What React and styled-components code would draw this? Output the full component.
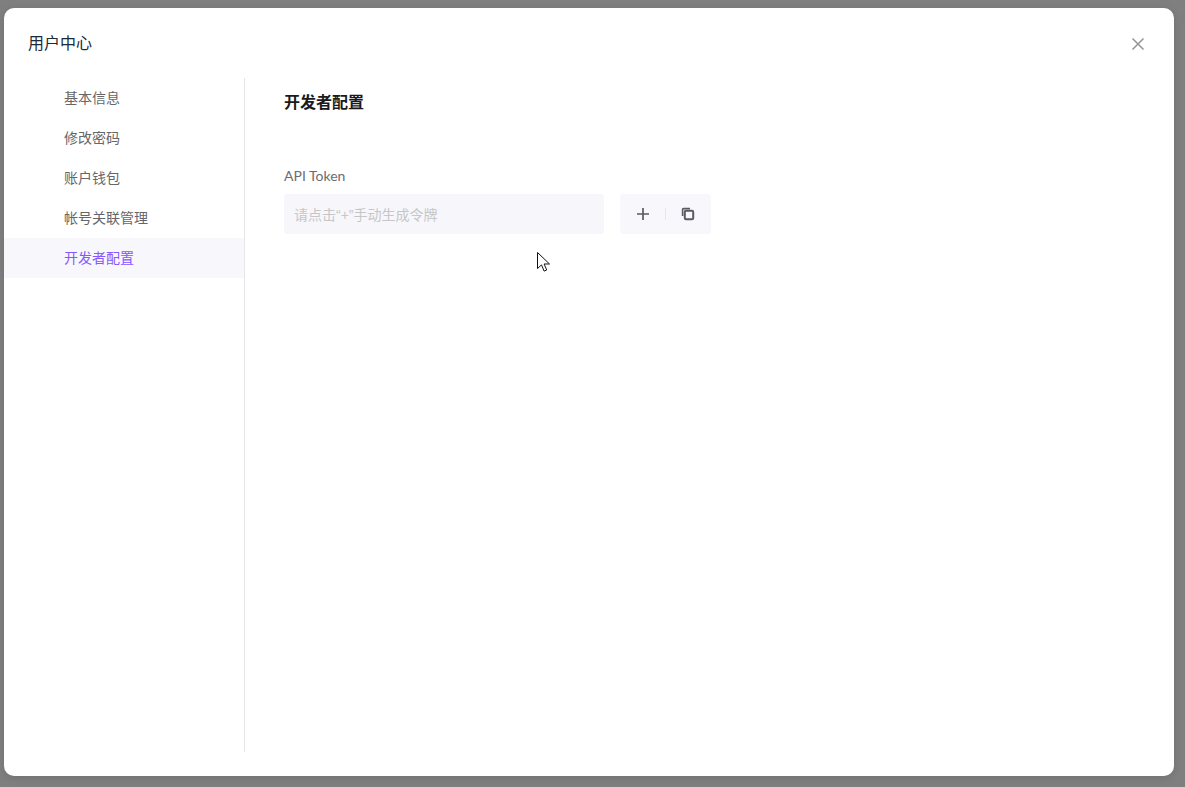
import React from 'react'
import styled, { createGlobalStyle } from 'styled-components'

const GlobalStyle = createGlobalStyle`
	html, body {
		margin: 0;
		padding: 0;
		height: 100%;
		background: #808080;
		font-family: 'Liberation Sans', 'Noto Sans CJK SC', sans-serif;
	}
`

const Backdrop = styled.div`
	position: relative;
	box-sizing: border-box;
	width: 1185px;
	height: 787px;
	overflow: hidden;
	padding: 8px 11px 11px 4px;
	background: #7f7f7f;
`

const Modal = styled.div`
	display: flex;
	flex-direction: column;
	height: 768px;
	background: #fff;
	border-radius: 10px;
	box-shadow: 0 2px 8px rgba(0, 0, 0, 0.12);
`

const ModalHeader = styled.header`
	display: flex;
	align-items: center;
	justify-content: space-between;
	box-sizing: border-box;
	height: 70px;
	padding: 0 29px 0 24px;
`

const ModalTitle = styled.h2`
	margin: 0 0 2px;
	font-size: 16px;
	font-weight: 400;
	color: #1c2a3a;
`

const CloseButton = styled.button`
	display: flex;
	margin-top: 2px;
	padding: 0;
	border: 0;
	background: none;
	color: #97979b;
`

const ModalBody = styled.div`
	display: flex;
	height: 674px;
`

const Sidebar = styled.nav`
	flex: none;
	box-sizing: content-box;
	width: 240px;
	border-right: 1px solid #e6e6e8;
`

const MenuItem = styled.div`
	height: 40px;
	padding-left: 60px;
	line-height: 40px;
	font-size: 14px;
	color: ${props => (props.$active ? '#8559ff' : '#66666a')};
	background: ${props => (props.$active ? '#f8f7fc' : 'transparent')};
`

const Content = styled.main`
	flex: 1;
	padding: 15px 39px 0;
`

const SectionTitle = styled.h3`
	margin: 0;
	height: 20px;
	line-height: 20px;
	font-size: 16px;
	font-weight: 700;
	color: #1a1a1c;
`

const FieldLabel = styled.label`
	display: block;
	margin-top: 53px;
	line-height: 20px;
	font-family: 'Lato', 'Noto Sans', sans-serif;
	font-size: 14px;
	color: #6c6c74;
`

const FieldRow = styled.div`
	display: flex;
	gap: 16px;
	margin-top: 8px;
`

const TokenInput = styled.div`
	box-sizing: border-box;
	width: 320px;
	height: 40px;
	padding-left: 10px;
	line-height: 42px;
	font-size: 14px;
	color: #c6c6c8;
	background: #f6f6fb;
	border-radius: 3px;
`

const ActionGroup = styled.div`
	display: flex;
	align-items: center;
	box-sizing: border-box;
	width: 91px;
	height: 40px;
	padding-left: 16px;
	background: #f8f7fc;
	border-radius: 3px;
`

const ActionButton = styled.button`
	display: flex;
	padding: 0;
	border: 0;
	background: none;
	color: #5a5a60;
`

const Divider = styled.span`
	width: 1px;
	height: 12px;
	margin: 0 15px;
	background: #e8e8ec;
`

const Cursor = styled.svg`
	position: absolute;
	left: 537px;
	top: 252px;
`

export default function App() {
	const menu = ['基本信息', '修改密码', '账户钱包', '帐号关联管理', '开发者配置']

	return (
		<Backdrop>
			<GlobalStyle />
			<Modal>
				<ModalHeader>
					<ModalTitle>用户中心</ModalTitle>
					<CloseButton>
						<svg width="14" height="14" viewBox="0 0 14 14" fill="none" stroke="currentColor" strokeWidth="1.6">
							<path d="M1.5 1.5l11 11M12.5 1.5l-11 11" />
						</svg>
					</CloseButton>
				</ModalHeader>
				<ModalBody>
					<Sidebar>
						{menu.map((item, i) => (
							<MenuItem key={item} $active={i === menu.length - 1}>{item}</MenuItem>
						))}
					</Sidebar>
					<Content>
						<SectionTitle>开发者配置</SectionTitle>
						<FieldLabel>API Token</FieldLabel>
						<FieldRow>
							<TokenInput>请点击“+”手动生成令牌</TokenInput>
							<ActionGroup>
								<ActionButton>
									<svg width="14" height="14" viewBox="0 0 14 14" fill="none" stroke="currentColor" strokeWidth="1.7">
										<path d="M7 1v12M1 7h12" />
									</svg>
								</ActionButton>
								<Divider />
								<ActionButton>
									<svg width="14" height="14" viewBox="0 0 14 14" fill="none" stroke="currentColor" strokeWidth="2">
										<rect x="3.8" y="3.8" width="8.4" height="8.4" rx="1.2" />
										<path d="M1.6 9V2.6a1 1 0 0 1 1-1H9" strokeWidth="1.6" />
									</svg>
								</ActionButton>
							</ActionGroup>
						</FieldRow>
					</Content>
				</ModalBody>
			</Modal>
			<Cursor width="14" height="21" viewBox="0 0 14 21">
				<path d="M0.5 0.5v16l4-3.6 2.6 6.2 2.6-1.1-2.6-6h5.4z" fill="#fff" stroke="#111" strokeWidth="1" />
			</Cursor>
		</Backdrop>
	)
}
